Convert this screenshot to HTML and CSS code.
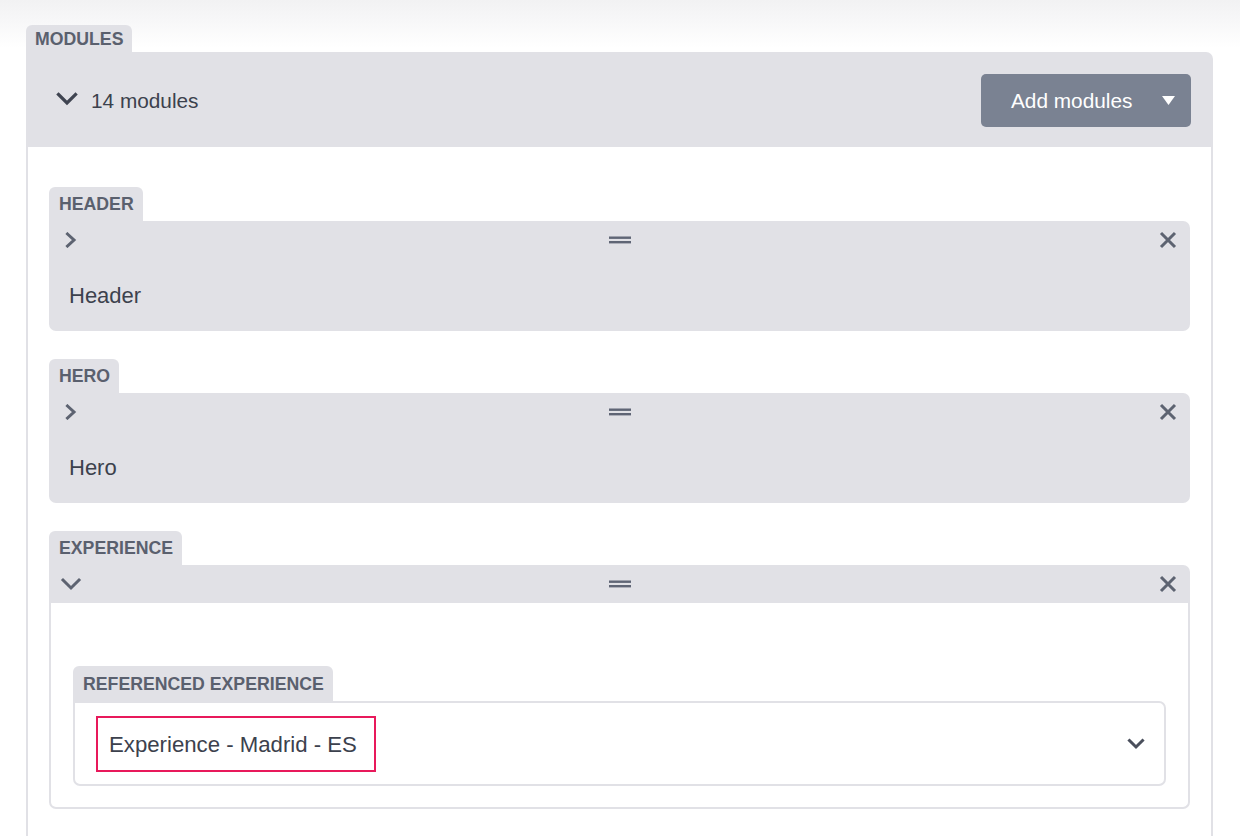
FILE: index.html
```html
<!DOCTYPE html>
<html lang="en">
<head>
<meta charset="utf-8">
<title>Modules</title>
<link rel="stylesheet" href="styles.css">
</head>
<body>
<div class="page">
  <section class="modules">
    <div class="tab tab-modules">MODULES</div>
    <div class="modules-panel">
      <div class="modules-head">
        <div class="count">
          <svg class="ico-chev-main" width="22" height="14" viewBox="0 0 22 14"><path d="M2.5 2.5 L11 11 L19.5 2.5" fill="none" stroke="#3f4451" stroke-width="3.2" stroke-linecap="square"/></svg>
          <span>14 modules</span>
        </div>
        <button class="add-btn" type="button">
          <span>Add modules</span>
          <svg width="13" height="9" viewBox="0 0 13 9"><path d="M0 0 H13 L6.5 9 Z" fill="#ffffff"/></svg>
        </button>
      </div>
      <div class="modules-body">

        <div class="module">
          <div class="tab">HEADER</div>
          <div class="card">
            <div class="card-bar">
              <span class="slot slot-left"><svg width="12" height="16" viewBox="0 0 12 16"><path d="M2.5 2 L9 8 L2.5 14" fill="none" stroke="#5d6371" stroke-width="3" stroke-linecap="square"/></svg></span>
              <span class="slot slot-mid"><svg width="22" height="8" viewBox="0 0 22 8"><rect x="0" y="0.5" width="22" height="2.4" fill="#5f6575"/><rect x="0" y="5" width="22" height="2.4" fill="#5f6575"/></svg></span>
              <span class="slot slot-right"><svg width="18" height="18" viewBox="0 0 18 18"><path d="M2 2 L16 16 M16 2 L2 16" fill="none" stroke="#5d6371" stroke-width="3"/></svg></span>
            </div>
            <div class="card-title">Header</div>
          </div>
        </div>

        <div class="module">
          <div class="tab">HERO</div>
          <div class="card">
            <div class="card-bar">
              <span class="slot slot-left"><svg width="12" height="16" viewBox="0 0 12 16"><path d="M2.5 2 L9 8 L2.5 14" fill="none" stroke="#5d6371" stroke-width="3" stroke-linecap="square"/></svg></span>
              <span class="slot slot-mid"><svg width="22" height="8" viewBox="0 0 22 8"><rect x="0" y="0.5" width="22" height="2.4" fill="#5f6575"/><rect x="0" y="5" width="22" height="2.4" fill="#5f6575"/></svg></span>
              <span class="slot slot-right"><svg width="18" height="18" viewBox="0 0 18 18"><path d="M2 2 L16 16 M16 2 L2 16" fill="none" stroke="#5d6371" stroke-width="3"/></svg></span>
            </div>
            <div class="card-title">Hero</div>
          </div>
        </div>

        <div class="module">
          <div class="tab">EXPERIENCE</div>
          <div class="card card-open">
            <div class="card-bar">
              <span class="slot slot-left"><svg width="22" height="14" viewBox="0 0 22 14"><path d="M3 3 L11 11 L19 3" fill="none" stroke="#5d6371" stroke-width="3" stroke-linecap="square"/></svg></span>
              <span class="slot slot-mid"><svg width="22" height="8" viewBox="0 0 22 8"><rect x="0" y="0.5" width="22" height="2.4" fill="#5f6575"/><rect x="0" y="5" width="22" height="2.4" fill="#5f6575"/></svg></span>
              <span class="slot slot-right"><svg width="18" height="18" viewBox="0 0 18 18"><path d="M2 2 L16 16 M16 2 L2 16" fill="none" stroke="#5d6371" stroke-width="3"/></svg></span>
            </div>
            <div class="card-body">
              <div class="field">
                <div class="tab tab-field">REFERENCED EXPERIENCE</div>
                <div class="select">
                  <span class="highlight">Experience - Madrid - ES</span>
                  <svg width="18" height="12" viewBox="0 0 18 12"><path d="M2.5 2.5 L9 9 L15.5 2.5" fill="none" stroke="#4a4f5c" stroke-width="3" stroke-linecap="square"/></svg>
                </div>
              </div>
            </div>
          </div>
        </div>

      </div>
    </div>
  </section>
</div>
</body>
</html>
```

FILE: styles.css
```css
html, body {
  margin: 0;
  padding: 0;
  overflow: hidden;
}

html {
  background: linear-gradient(#f2f2f3 0px, #f7f7f8 20px, #ffffff 48px) no-repeat #ffffff;
}

body {
  font-family: "Liberation Sans", Arial, Helvetica, sans-serif;
  color: #3c414d;
  height: 836px;
}

.page {
  padding: 25px 0 0 26px;
}

.modules {
  width: 1187px;
  display: flex;
  flex-direction: column;
}

.tab {
  align-self: flex-start;
  background: #e1e1e6;
  color: #5a606e;
  font-weight: 700;
  font-size: 17.7px;
  height: 34px;
  line-height: 34px;
  padding: 0 9px 0 10px;
  border-radius: 6px 6px 0 0;
}

.tab-modules {
  height: 27px;
  line-height: 29px;
  padding: 0 9px;
}

.modules-panel {
  display: flex;
  flex-direction: column;
}

.modules-head {
  background: #e1e1e6;
  height: 95px;
  border-radius: 0 7px 0 0;
  display: flex;
  align-items: center;
  justify-content: space-between;
  padding: 0 22px 0 30px;
}

.count {
  display: flex;
  align-items: center;
  gap: 13px;
  font-size: 20.8px;
  color: #3c414d;
  padding-top: 2px;
}

.count svg {
  display: block;
  margin-top: -3px;
}

.add-btn {
  width: 210px;
  height: 53px;
  background: #7a8292;
  border: none;
  border-radius: 5px;
  color: #ffffff;
  font-family: inherit;
  font-size: 20.8px;
  display: flex;
  align-items: center;
  justify-content: space-between;
  padding: 0 16px 0 30px;
  margin-top: 2px;
}

.add-btn svg {
  display: block;
}

.modules-body {
  border: 2px solid #e1e1e6;
  border-top: none;
  border-bottom: none;
  padding: 40px 21px 27px;
  display: flex;
  flex-direction: column;
  gap: 28px;
}

.module {
  display: flex;
  flex-direction: column;
}

.card {
  background: #e1e1e6;
  border-radius: 0 7px 7px 7px;
}

.card-bar {
  height: 38px;
  display: grid;
  grid-template-columns: 1fr auto 1fr;
  align-items: center;
  padding: 0 10px;
}

.slot {
  width: 24px;
  height: 24px;
  display: flex;
  align-items: center;
  justify-content: center;
}

.slot svg {
  display: block;
}

.slot-left {
  justify-self: start;
}

.slot-mid {
  justify-self: center;
}

.slot-right {
  justify-self: end;
}

.card-title {
  font-size: 22px;
  line-height: 30px;
  padding: 22px 20px 20px;
  color: #3c414d;
}

.card-open {
  background: transparent;
}

.card-open .card-bar {
  background: #e1e1e6;
  border-radius: 0 7px 0 0;
}

.card-body {
  background: #ffffff;
  border: 2px solid #e1e1e6;
  border-top: none;
  border-radius: 0 0 7px 7px;
  padding: 63px 22px 21px;
}

.field {
  display: flex;
  flex-direction: column;
}

.tab-field {
  height: 35px;
  line-height: 36px;
  padding: 0 9px 0 10px;
}

.select {
  height: 85px;
  box-sizing: border-box;
  border: 2px solid #e1e1e6;
  border-radius: 0 7px 7px 7px;
  background: #ffffff;
  display: flex;
  align-items: center;
  justify-content: space-between;
  padding: 0 19px 0 21px;
}

.highlight {
  display: block;
  height: 56px;
  box-sizing: border-box;
  border: 2px solid #e8195b;
  font-size: 22.2px;
  line-height: 53px;
  padding: 0 17px 0 11px;
  color: #3c414d;
}

.select svg {
  display: block;
}
```
